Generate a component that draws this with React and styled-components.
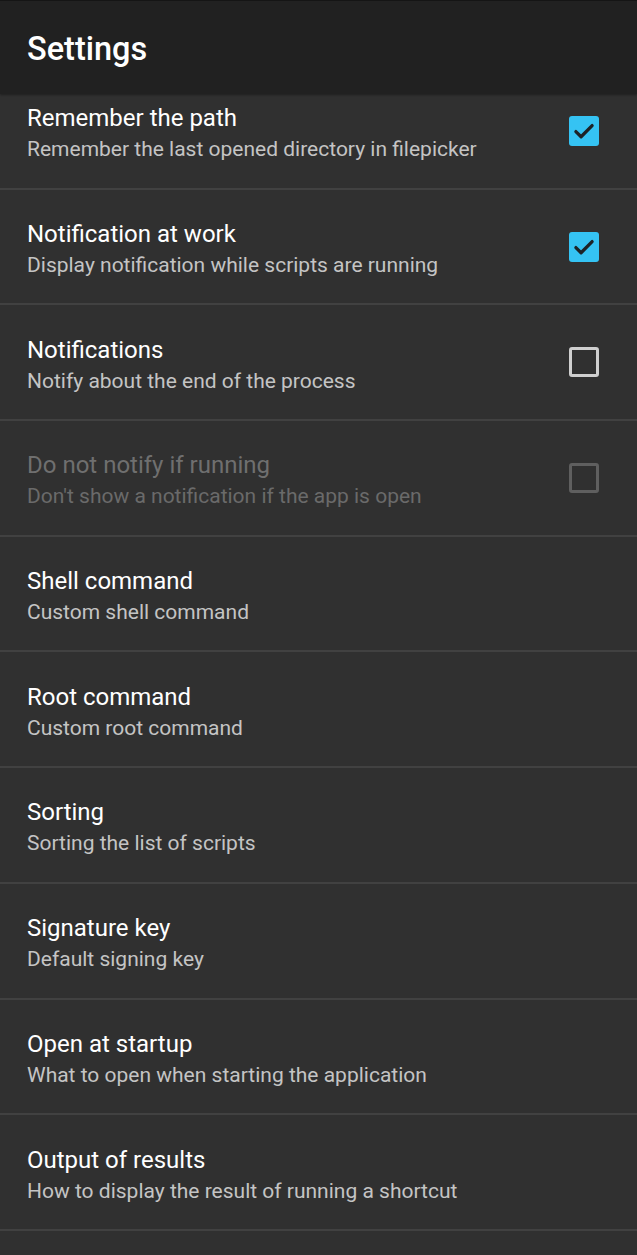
import React from "react";
import styled, { createGlobalStyle } from "styled-components";

const Global = createGlobalStyle`
  html, body {
    margin: 0;
    padding: 0;
    background: #303030;
  }
  body {
    font-family: Roboto, "Noto Sans", sans-serif;
    -webkit-font-smoothing: antialiased;
  }
`;

const Screen = styled.div`
  width: 637px;
  height: 1255px;
  display: flex;
  flex-direction: column;
  background: #303030;
  overflow: hidden;
`;

const AppBar = styled.header`
  position: relative;
  z-index: 1;
  flex: 0 0 94px;
  display: flex;
  align-items: center;
  padding: 2px 27px 0;
  background: #212121;
  border-top: 1px solid #151515;
  box-sizing: border-box;
  box-shadow: 0 1px 2px rgba(0, 0, 0, 0.35);
`;

const Title = styled.h1`
  margin: 0;
  font-size: 32.5px;
  font-weight: 500;
  color: #ffffff;
`;

const Scroll = styled.div`
  flex: 1;
  overflow: hidden;
`;

const List = styled.div`
  margin-top: -20px;
`;

const Row = styled.div`
  height: 113.7px;
  display: flex;
  align-items: center;
  padding: 0 38px 0 27px;
  border-bottom: 2px solid #414141;
`;

const Text = styled.div`
  flex: 1;
  display: flex;
  flex-direction: column;
  gap: 2px;
  padding-top: 6px;
  color: ${p => (p.disabled ? "#6f6f6f" : "#ffffff")};
`;

const Label = styled.div`
  font-size: 24px;
  line-height: 29px;
`;

const Summary = styled.div`
  font-size: 21px;
  line-height: 28px;
  color: ${p => (p.disabled ? "#6a6a6a" : "#c4c4c4")};
`;

const Box = styled.div`
  width: 30px;
  height: 30px;
  box-sizing: border-box;
  border-radius: 3px;
  display: flex;
  align-items: center;
  justify-content: center;
  background: ${p => (p.checked ? "#35c3f3" : "transparent")};
  border: ${p =>
    p.checked ? "none" : `3px solid ${p.disabled ? "#5f5f5f" : "#cfcfcf"}`};
`;

const Check = () => (
  <svg width="26" height="26" viewBox="0 0 24 24">
    <path
      d="M4.5 12.5l4.8 4.8L19.5 7"
      fill="none"
      stroke="#1d2327"
      strokeWidth="3"
      strokeLinecap="round"
      strokeLinejoin="round"
    />
  </svg>
);

const items = [
  { t: "Remember the path", s: "Remember the last opened directory in filepicker", box: "on" },
  { t: "Notification at work", s: "Display notification while scripts are running", box: "on" },
  { t: "Notifications", s: "Notify about the end of the process", box: "off" },
  { t: "Do not notify if running", s: "Don't show a notification if the app is open", box: "off", disabled: true },
  { t: "Shell command", s: "Custom shell command" },
  { t: "Root command", s: "Custom root command" },
  { t: "Sorting", s: "Sorting the list of scripts" },
  { t: "Signature key", s: "Default signing key" },
  { t: "Open at startup", s: "What to open when starting the application" },
  { t: "Output of results", s: "How to display the result of running a shortcut" },
];

export default function App() {
  return (
    <Screen>
      <Global />
      <AppBar>
        <Title>Settings</Title>
      </AppBar>
      <Scroll>
        <List>
          {items.map(it => (
            <Row key={it.t}>
              <Text disabled={it.disabled}>
                <Label>{it.t}</Label>
                <Summary disabled={it.disabled}>{it.s}</Summary>
              </Text>
              {it.box && (
                <Box checked={it.box === "on"} disabled={it.disabled}>
                  {it.box === "on" && <Check />}
                </Box>
              )}
            </Row>
          ))}
        </List>
      </Scroll>
    </Screen>
  );
}
